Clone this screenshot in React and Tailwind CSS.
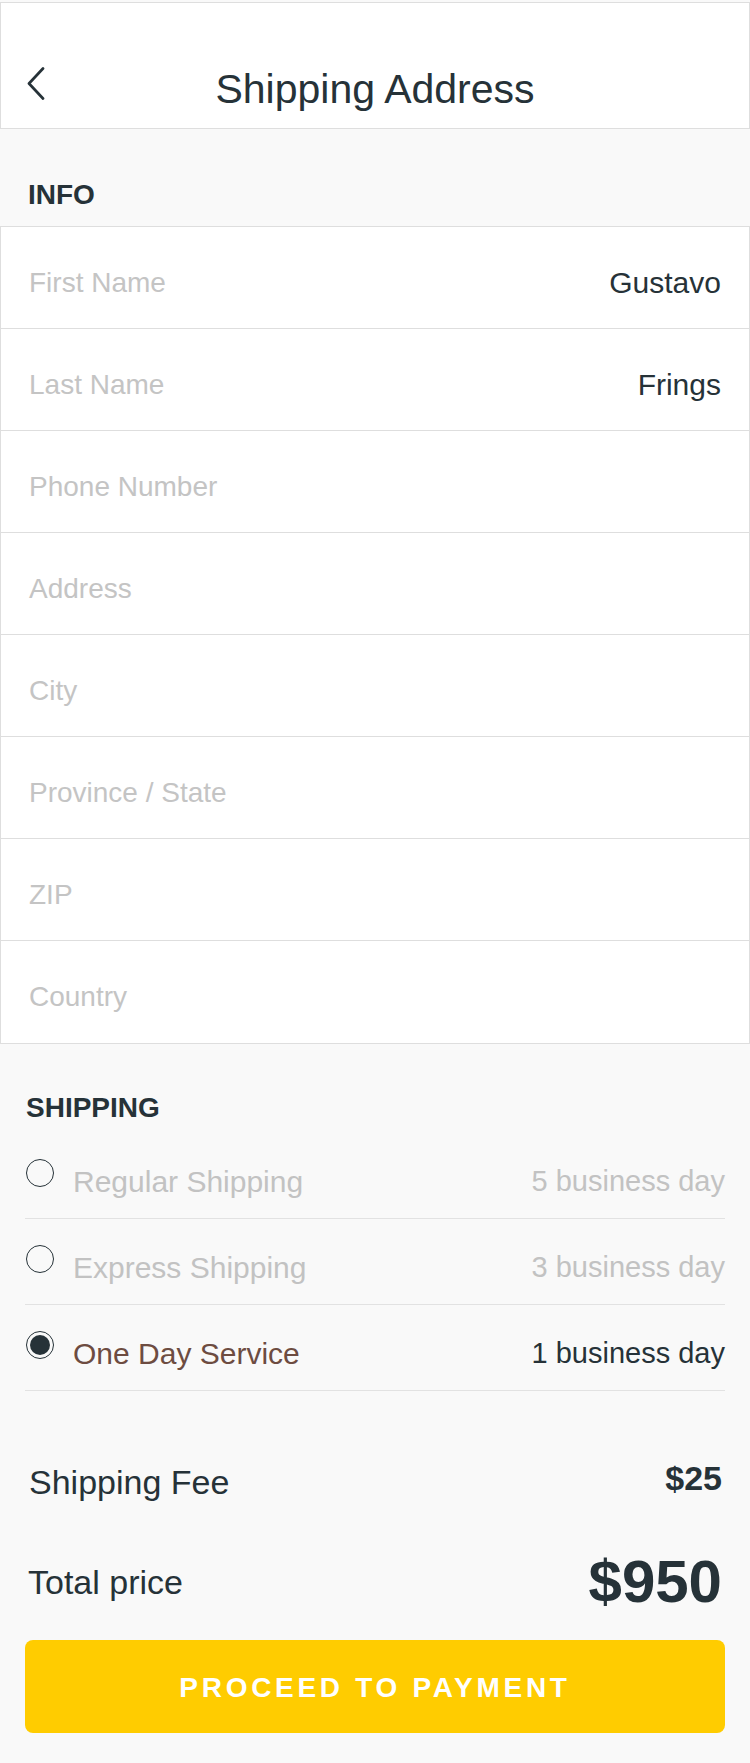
import { useState } from 'react';

const fields = [
  { label: 'First Name', value: 'Gustavo' },
  { label: 'Last Name', value: 'Frings' },
  { label: 'Phone Number', value: '' },
  { label: 'Address', value: '' },
  { label: 'City', value: '' },
  { label: 'Province / State', value: '' },
  { label: 'ZIP', value: '' },
  { label: 'Country', value: '' }
];

const shippingOptions = [
  { id: 'regular', name: 'Regular Shipping', days: '5 business day' },
  { id: 'express', name: 'Express Shipping', days: '3 business day' },
  { id: 'oneday', name: 'One Day Service', days: '1 business day' }
];

function Radio({ checked }) {
  return (
    <div className="w-[28px] h-[28px] shrink-0 rounded-full border-[1.5px] border-[#263238] flex items-center justify-center">
      {checked && <div className="w-[20px] h-[20px] rounded-full bg-[#263238]" />}
    </div>
  );
}

export default function App() {
  const [selected, setSelected] = useState('oneday');

  return (
    <div className="min-h-[1763px] bg-[#f9f9f9] text-[#263238] font-['Helvetica_Neue','Liberation_Sans',Arial,sans-serif] pt-[2px]">
      {/* Header */}
      <div className="relative h-[127px] bg-white border border-[#dedede] flex items-start justify-center pt-[66px]">
        <button className="absolute left-[25px] top-[63px] p-0">
          <svg width="20" height="34" viewBox="0 0 20 34" fill="none">
            <path d="M17 2.5L3 17.5L17 32.5" stroke="#263238" strokeWidth="2.7" strokeLinecap="round" strokeLinejoin="round" />
          </svg>
        </button>
        <h1 className="text-[41px] leading-none font-normal">Shipping Address</h1>
      </div>

      {/* Info */}
      <div className="px-[28px] pt-[52px] pb-[17px]">
        <h2 className="text-[28px] leading-none font-bold">INFO</h2>
      </div>
      <div className="bg-white border border-[#dedede]">
        {fields.map((field, i) => (
          <div
            key={field.label}
            className={`h-[102px] flex items-center justify-between px-[28px] pt-[10px] ${
              i < fields.length - 1 ? 'border-b border-[#dedede]' : ''
            }`}
          >
            <span className="text-[28px] leading-none text-[#c4c4c4]">{field.label}</span>
            {field.value && (
              <span className="text-[30px] leading-none text-[#263238]">{field.value}</span>
            )}
          </div>
        ))}
      </div>

      {/* Shipping */}
      <div className="px-[25px]">
        <h2 className="text-[28px] leading-none font-bold pt-[50px] pb-[11px] pl-[1px]">SHIPPING</h2>
        {shippingOptions.map(option => {
          const isSelected = selected === option.id;
          return (
            <div
              key={option.id}
              onClick={() => setSelected(option.id)}
              className="h-[86px] flex items-start border-b border-[#e2e2e2] cursor-pointer"
            >
              <div className="pt-[26px] pl-[1px]">
                <Radio checked={isSelected} />
              </div>
              <span
                className={`ml-[19px] pt-[34px] text-[30px] leading-none ${
                  isSelected ? 'text-[#6d4c41]' : 'text-[#c2c2c2]'
                }`}
              >
                {option.name}
              </span>
              <span
                className={`ml-auto pt-[34px] text-[29px] leading-none ${
                  isSelected ? 'text-[#263238]' : 'text-[#c2c2c2]'
                }`}
              >
                {option.days}
              </span>
            </div>
          );
        })}

        {/* Totals */}
        <div className="mt-[61px] h-[60px] flex items-center justify-between pl-[4px] pr-[3px]">
          <span className="text-[34px] leading-none">Shipping Fee</span>
          <span className="text-[34px] leading-none font-bold -mt-[9px]">$25</span>
        </div>
        <div className="mt-[40px] h-[60px] flex items-center justify-between pl-[3px] pr-[3px]">
          <span className="text-[34px] leading-none">Total price</span>
          <span className="text-[60px] leading-none font-bold">$950</span>
        </div>

        <button className="mt-[28px] w-full h-[93px] rounded-[8px] bg-[#ffcc00] text-white text-[28px] font-bold tracking-[3.7px] flex items-center justify-center pt-[2px]">
          PROCEED TO PAYMENT
        </button>
      </div>
    </div>
  );
}
